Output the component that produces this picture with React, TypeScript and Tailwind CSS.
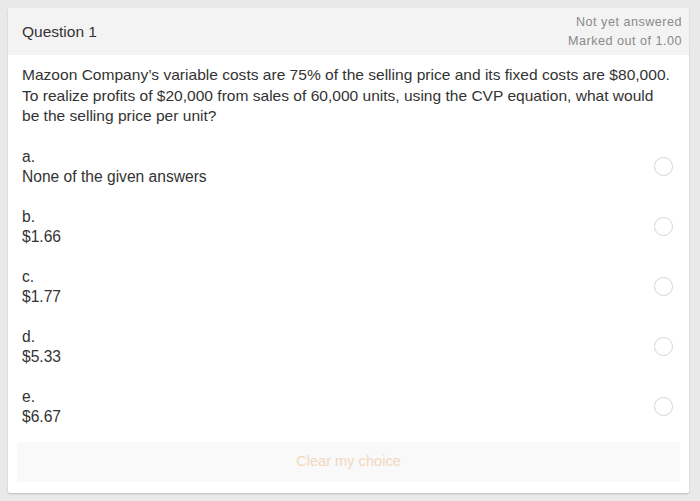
const options = [
  { letter: "a.", text: "None of the given answers" },
  { letter: "b.", text: "$1.66" },
  { letter: "c.", text: "$1.77" },
  { letter: "d.", text: "$5.33" },
  { letter: "e.", text: "$6.67" },
];

const questionLines = [
  "Mazoon Company’s variable costs are 75% of the selling price and its fixed costs are $80,000.",
  "To realize profits of $20,000 from sales of 60,000 units, using the CVP equation, what would",
  "be the selling price per unit?",
];

const App = () => {
  return (
    <div
      className="w-[700px] h-[501px] bg-[#e9e9e9] pt-[8px] px-[8px] overflow-hidden"
      style={{ fontFamily: '"Liberation Sans", Arial, sans-serif' }}
    >
      <div className="w-[681px] bg-white rounded-[2px] shadow-[0_1px_2px_rgba(0,0,0,0.2)] pb-[11px]">
        {/* header */}
        <div className="h-[47px] bg-[#f3f3f3] flex items-center justify-between pl-[14px] pr-[7px] rounded-t-[2px]">
          <div className="text-[15.5px] text-[#333]">Question 1</div>
          <div className="text-[12.6px] text-[#8a8a8a] leading-[19px] text-right tracking-[0.5px]">
            <div>Not yet answered</div>
            <div>Marked out of 1.00</div>
          </div>
        </div>

        {/* question text */}
        <div className="px-[14px] pt-[10px] text-[15.55px] leading-[20.5px] text-[#333]">
          {questionLines.map((line) => (
            <div key={line} className="whitespace-nowrap">{line}</div>
          ))}
        </div>

        {/* options */}
        <div className="pt-[20px] flex flex-col gap-[20px]">
          {options.map((opt) => (
            <div key={opt.letter} className="flex items-start justify-between pl-[14px] pr-[16px]">
              <div className="text-[15.6px] leading-[20px] text-[#333]">
                <div>{opt.letter}</div>
                <div>{opt.text}</div>
              </div>
              <div className="mt-[10px] w-[19px] h-[19px] rounded-full border border-[#d6d6d6] bg-white" />
            </div>
          ))}
        </div>

        {/* clear */}
        <div className="mx-[9px] mt-[15px] h-[40px] bg-[#f9f9f9] flex items-center justify-center text-[14.6px] text-[#f2d8bd]">
          Clear my choice
        </div>
      </div>
    </div>
  );
};

export default App;
